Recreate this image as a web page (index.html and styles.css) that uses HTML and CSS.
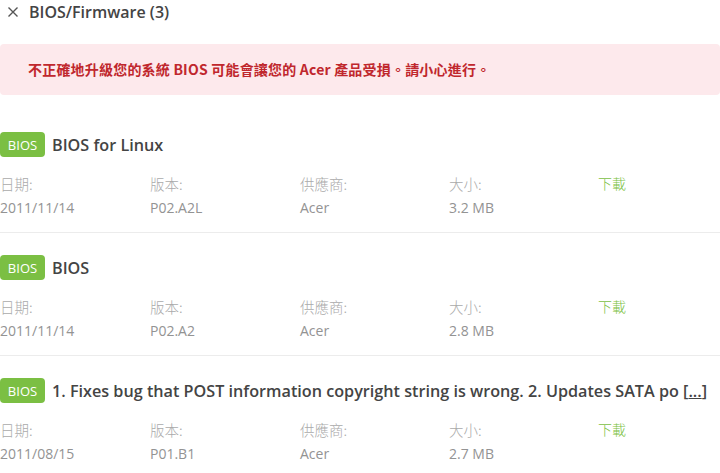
FILE: index.html
```html
<!DOCTYPE html>
<html lang="zh-Hant">
<head>
<meta charset="utf-8">
<link rel="stylesheet" href="styles.css">
</head>
<body>
<div class="page">
  <div class="header">
    <span class="close"><svg width="10" height="10" viewBox="0 0 10 10"><path d="M0.5 0.5 L9.5 9.5 M9.5 0.5 L0.5 9.5" stroke="#555" stroke-width="1.4" fill="none"/></svg></span>
    <span class="heading">BIOS/Firmware (3)</span>
  </div>
  <div class="alert">不正確地升級您的系統 BIOS 可能會讓您的 Acer 產品受損。請小心進行。</div>

  <div class="item first">
    <div class="item-title"><span class="badge">BIOS</span><span class="name">BIOS for Linux</span></div>
    <div class="grid">
      <div class="label">日期:</div><div class="label">版本:</div><div class="label">供應商:</div><div class="label">大小:</div><div class="dl">下載</div>
      <div class="value">2011/11/14</div><div class="value">P02.A2L</div><div class="value">Acer</div><div class="value">3.2 MB</div><div></div>
    </div>
  </div>

  <div class="item">
    <div class="item-title"><span class="badge">BIOS</span><span class="name">BIOS</span></div>
    <div class="grid">
      <div class="label">日期:</div><div class="label">版本:</div><div class="label">供應商:</div><div class="label">大小:</div><div class="dl">下載</div>
      <div class="value">2011/11/14</div><div class="value">P02.A2</div><div class="value">Acer</div><div class="value">2.8 MB</div><div></div>
    </div>
  </div>

  <div class="item last">
    <div class="item-title"><span class="badge">BIOS</span><span class="name">1. Fixes bug that POST information copyright string is wrong. 2. Updates SATA po [<u>...</u>]</span></div>
    <div class="grid">
      <div class="label">日期:</div><div class="label">版本:</div><div class="label">供應商:</div><div class="label">大小:</div><div class="dl">下載</div>
      <div class="value">2011/08/15</div><div class="value">P01.B1</div><div class="value">Acer</div><div class="value">2.7 MB</div><div></div>
    </div>
  </div>
</div>
</body>
</html>
```

FILE: styles.css
```css
html, body {
  margin: 0;
  padding: 0;
  background: #fff;
}
body {
  font-family: "Open Sans", "Noto Sans CJK TC", sans-serif;
  color: #444;
  overflow: hidden;
}
.page {
  width: 720px;
}
.header {
  display: flex;
  align-items: center;
  height: 24px;
}
.close {
  width: 29px;
  padding-left: 8px;
  box-sizing: border-box;
  display: flex;
  align-items: center;
}
.heading {
  font-size: 16px;
  font-weight: 600;
  color: #444;
}
.alert {
  margin-top: 20px;
  height: 51px;
  box-sizing: border-box;
  background: #fde9ec;
  border-radius: 4px;
  color: #c0272d;
  font-size: 14px;
  font-weight: 700;
  line-height: 20px;
  letter-spacing: 0.2px;
  padding: 15px 0 0 28px;
  font-family: "Noto Sans CJK TC", sans-serif;
}
.item {
  border-bottom: 1px solid #ececec;
  padding: 22px 0 15px;
}
.item.first {
  padding-top: 37px;
}
.item.last {
  border-bottom: none;
}
.item-title {
  display: flex;
  align-items: center;
  height: 25px;
}
.badge {
  background: #7bbf43;
  color: #fff;
  border-radius: 4px;
  height: 25px;
  width: 45px;
  display: flex;
  align-items: center;
  justify-content: center;
  font-size: 13px;
  margin-right: 7px;
  flex: none;
}
.name {
  font-size: 16.2px;
  font-weight: 600;
  color: #444;
  white-space: nowrap;
}
.grid {
  display: grid;
  grid-template-columns: 150px 150px 149px 149px auto;
  margin-top: 17px;
  font-size: 14px;
  row-gap: 5px;
}
.label {
  color: #aaa;
  line-height: 19px;
  font-family: "Noto Sans CJK TC", sans-serif;
  font-weight: 300;
  font-size: 14.5px;
}
.dl {
  color: #7bbf43;
  line-height: 19px;
  font-family: "Noto Sans CJK TC", sans-serif;
  font-weight: 300;
}
.value {
  color: #939393;
  line-height: 19px;
}
```
